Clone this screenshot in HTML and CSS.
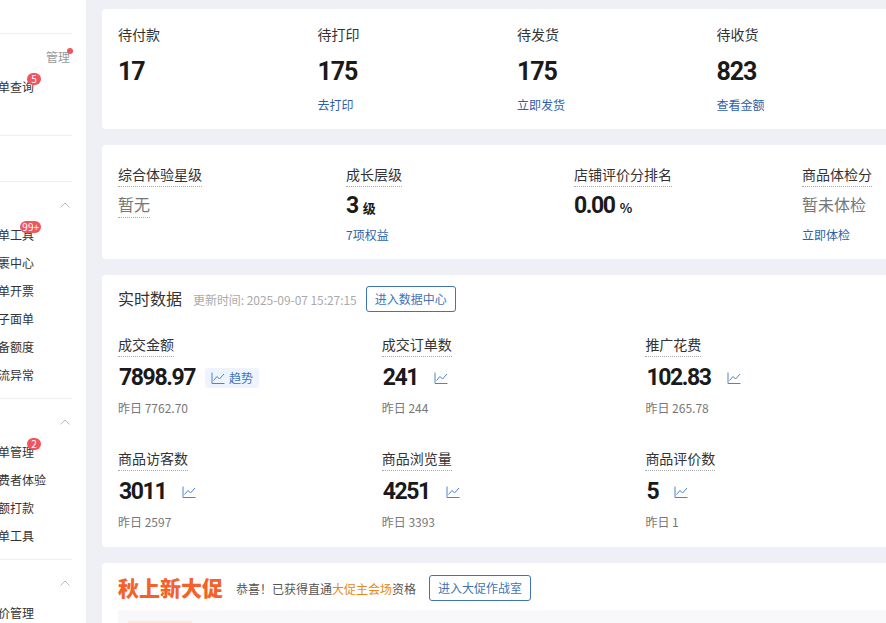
FILE: index.html
```html
<!DOCTYPE html>
<html lang="zh-CN">
<head>
  <meta charset="UTF-8" />
  <meta name="viewport" content="width=device-width, initial-scale=1.0"/>
  <title>商家后台 - 首页</title>
  <link rel="stylesheet" href="styles.css">
</head>
<body>
  <!-- Sidebar, scrolled off to the left -->
  <aside class="sidebar">
    <div class="side-group side-first">
      <div class="side-head"><span class="manage">管理<i class="dot"></i></span></div>
      <div class="side-item"><span class="side-text">订单查询<b class="badge badge-one">5</b></span></div>
    </div>
    <div class="side-group side-empty"></div>
    <div class="side-group side-tools">
      <div class="side-head"><svg class="chevron" viewBox="0 0 10 6"><path d="M0.5 5.5L5 1l4.500 4.500"/></svg></div>
      <div class="side-item"><span class="side-text">批量下单工具<b class="badge badge-wide">99+</b></span></div>
      <div class="side-item"><span class="side-text">包裹中心</span></div>
      <div class="side-item"><span class="side-text">订单开票</span></div>
      <div class="side-item"><span class="side-text">电子面单</span></div>
      <div class="side-item"><span class="side-text">预备额度</span></div>
      <div class="side-item"><span class="side-text">物流异常</span></div>
    </div>
    <div class="side-group side-after">
      <div class="side-head"><svg class="chevron" viewBox="0 0 10 6"><path d="M0.5 5.500L5 1l4.500 4.500"/></svg></div>
      <div class="side-item"><span class="side-text">售后单管理<b class="badge badge-one">2</b></span></div>
      <div class="side-item side-item-long"><span class="side-text">消费者体验</span></div>
      <div class="side-item"><span class="side-text">小额打款</span></div>
      <div class="side-item"><span class="side-text">售后单工具</span></div>
    </div>
    <div class="side-group side-last">
      <div class="side-head"><svg class="chevron" viewBox="0 0 10 6"><path d="M0.5 5.500L5 1l4.500 4.500"/></svg></div>
      <div class="side-item"><span class="side-text">评价管理</span></div>
    </div>
  </aside>

  <main class="main">
    <!-- Orders -->
    <section class="card card-orders">
      <div class="order-col">
        <div class="order-label">待付款</div>
        <div class="big-num">17</div>
      </div>
      <div class="order-col">
        <div class="order-label">待打印</div>
        <div class="big-num">175</div>
        <a class="link">去打印</a>
      </div>
      <div class="order-col">
        <div class="order-label">待发货</div>
        <div class="big-num">175</div>
        <a class="link">立即发货</a>
      </div>
      <div class="order-col">
        <div class="order-label">待收货</div>
        <div class="big-num">823</div>
        <a class="link">查看金额</a>
      </div>
    </section>

    <!-- Shop levels -->
    <section class="card card-levels">
      <div class="level-col">
        <div><span class="dotted-label">综合体验星级</span></div>
        <div class="level-value"><span class="muted-value">暂无</span></div>
      </div>
      <div class="level-col">
        <div><span class="dotted-label">成长层级</span></div>
        <div class="level-value"><span class="big-num big-inline">3</span><span class="unit">级</span></div>
        <a class="link link-small">7项权益</a>
      </div>
      <div class="level-col">
        <div><span class="dotted-label">店铺评价分排名</span></div>
        <div class="level-value"><span class="big-num big-inline">0.00</span><span class="unit">%</span></div>
      </div>
      <div class="level-col">
        <div><span class="dotted-label">商品体检分</span></div>
        <div class="level-value"><span class="muted-value plain">暂未体检</span></div>
        <a class="link link-small">立即体检</a>
      </div>
    </section>

    <!-- Realtime data -->
    <section class="card card-data">
      <div class="data-head">
        <h2 class="card-title">实时数据</h2>
        <span class="update-time">更新时间: 2025-09-07 15:27:15</span>
        <a class="outline-btn">进入数据中心</a>
      </div>
      <div class="data-grid">
        <div class="data-cell">
          <div><span class="dotted-label">成交金额</span></div>
          <div class="data-row">
            <span class="big-num big-inline">7898.97</span>
            <span class="trend trend-box"><svg class="trend-icon" viewBox="0 0 14 12"><path d="M1 0.500V11.500H13.500M2.500 8.500L6 4.500L8.500 7L13 2"/></svg>趋势</span>
          </div>
          <div class="yesterday">昨日 7762.70</div>
        </div>
        <div class="data-cell">
          <div><span class="dotted-label">成交订单数</span></div>
          <div class="data-row">
            <span class="big-num big-inline">241</span>
            <span class="trend"><svg class="trend-icon" viewBox="0 0 14 12"><path d="M1 0.500V11.500H13.500M2.500 8.500L6 4.500L8.500 7L13 2"/></svg></span>
          </div>
          <div class="yesterday">昨日 244</div>
        </div>
        <div class="data-cell">
          <div><span class="dotted-label">推广花费</span></div>
          <div class="data-row">
            <span class="big-num big-inline">102.83</span>
            <span class="trend"><svg class="trend-icon" viewBox="0 0 14 12"><path d="M1 0.500V11.500H13.500M2.500 8.500L6 4.500L8.500 7L13 2"/></svg></span>
          </div>
          <div class="yesterday">昨日 265.78</div>
        </div>
        <div class="data-cell">
          <div><span class="dotted-label">商品访客数</span></div>
          <div class="data-row">
            <span class="big-num big-inline">3011</span>
            <span class="trend"><svg class="trend-icon" viewBox="0 0 14 12"><path d="M1 0.500V11.500H13.500M2.500 8.500L6 4.500L8.500 7L13 2"/></svg></span>
          </div>
          <div class="yesterday">昨日 2597</div>
        </div>
        <div class="data-cell">
          <div><span class="dotted-label">商品浏览量</span></div>
          <div class="data-row">
            <span class="big-num big-inline">4251</span>
            <span class="trend"><svg class="trend-icon" viewBox="0 0 14 12"><path d="M1 0.500V11.500H13.500M2.500 8.500L6 4.500L8.500 7L13 2"/></svg></span>
          </div>
          <div class="yesterday">昨日 3393</div>
        </div>
        <div class="data-cell">
          <div><span class="dotted-label">商品评价数</span></div>
          <div class="data-row">
            <span class="big-num big-inline">5</span>
            <span class="trend"><svg class="trend-icon" viewBox="0 0 14 12"><path d="M1 0.500V11.500H13.500M2.500 8.500L6 4.500L8.500 7L13 2"/></svg></span>
          </div>
          <div class="yesterday">昨日 1</div>
        </div>
      </div>
    </section>

    <!-- Promotion -->
    <section class="card card-promo">
      <div class="promo-head">
        <span class="promo-title">秋上新大促</span>
        <span class="promo-text">恭喜！已获得直通<em>大促主会场</em>资格</span>
        <a class="outline-btn">进入大促作战室</a>
      </div>
      <div class="promo-panel"><span class="promo-tab"></span></div>
    </section>
  </main>
</body>
</html>
```

FILE: styles.css
```css
html, body {
  height: 100%;
}
body {
  margin: 0;
  display: flex;
  height: 623px;
  overflow: hidden;
  background-color: #eff0f6;
  color: #333;
  font-family: "Noto Sans CJK SC", "Liberation Sans", sans-serif;
}
a {
  cursor: pointer;
}

/* sidebar */
.sidebar {
  flex: 0 0 86px;
  width: 86px;
  height: 623px;
  padding-top: 33px;
  box-sizing: border-box;
  background-color: #fff;
}
.side-group {
  width: 72px;
  border-top: 1px solid #eee;
  box-sizing: border-box;
}
.side-first {
  height: 102px;
}
.side-empty {
  height: 46px;
}
.side-tools {
  height: 217px;
}
.side-after {
  height: 161px;
}
.side-head {
  display: flex;
  justify-content: flex-end;
  align-items: center;
  height: 20px;
  margin-top: 13px;
}
.side-item {
  display: flex;
  justify-content: flex-end;
  height: 28px;
  padding-right: 38px;
  font-size: 12px;
  line-height: 28px;
  white-space: nowrap;
}
.side-item-long {
  padding-right: 26px;
}
.side-text {
  position: relative;
  color: #333;
}
.side-first .side-head {
  margin-top: 12px;
  margin-bottom: 7px;
}
.side-tools .side-head,
.side-after .side-head,
.side-last .side-head {
  margin-bottom: 6px;
  padding-right: 2px;
}
.manage {
  position: relative;
  margin-right: 2px;
  font-size: 12px;
  color: #999;
}
.dot {
  position: absolute;
  top: 0;
  right: -3px;
  width: 6px;
  height: 6px;
  border-radius: 50%;
  background-color: #f0545c;
}
.badge {
  position: absolute;
  top: 0;
  right: -7px;
  height: 12px;
  min-width: 12px;
  padding: 0 1px;
  border-radius: 7px;
  background-color: #f0545c;
  color: #fff;
  font-size: 10px;
  font-weight: 400;
  line-height: 12px;
  text-align: center;
}
.badge-wide {
  right: -7px;
  padding: 0 2px;
}
.chevron {
  width: 10px;
  height: 6px;
  fill: none;
  stroke: #bbb;
  stroke-width: 1;
}

/* main column */
.main {
  flex: 0 0 auto;
  width: 900px;
  margin-left: 16px;
  padding-top: 9px;
}
.card {
  box-sizing: border-box;
  margin-bottom: 16px;
  padding: 0 16px;
  background-color: #fff;
  border-radius: 4px;
}
.link {
  display: block;
  font-size: 12px;
  line-height: 16px;
  color: #2f5fa8;
}
.big-num {
  font-family: Roboto, "Liberation Sans", sans-serif;
  font-size: 23px;
  font-weight: 700;
  letter-spacing: -1.4px;
  line-height: 28px;
  color: #1a1a1a;
}
.big-inline {
  display: inline-block;
}
.dotted-label {
  display: inline-block;
  padding-bottom: 1px;
  border-bottom: 1px dotted #aaa;
  font-size: 14px;
  line-height: 21px;
  color: #333;
}

/* orders */
.card-orders {
  display: grid;
  grid-template-columns: repeat(4, 199.5px);
  height: 120px;
  padding-top: 15px;
}
.order-label {
  font-size: 14px;
  line-height: 21px;
  color: #333;
}
.order-col .big-num {
  margin-top: 13px;
  margin-bottom: 11px;
  font-size: 25px;
  letter-spacing: -1.1px;
}

/* levels */
.card-levels {
  display: grid;
  grid-template-columns: repeat(4, 228px);
  height: 114px;
  padding-top: 16px;
}
.level-value {
  display: flex;
  align-items: baseline;
  height: 28px;
  margin-top: 5px;
}
.muted-value {
  border-bottom: 1px dotted #aaa;
  font-size: 16px;
  line-height: 25px;
  color: #777;
}
.muted-value.plain {
  font-size: 16px;
  border-bottom: none;
}
.unit {
  margin-left: 5px;
  font-size: 13px;
  font-weight: 700;
  color: #1a1a1a;
}
.link-small {
  margin-top: 7px;
}

/* realtime */
.card-data {
  height: 272px;
  padding-top: 11px;
}
.data-head {
  display: flex;
  align-items: center;
  height: 26px;
}
.card-title {
  margin: 0 11px 0 0;
  padding-bottom: 2px;
  font-size: 16px;
  font-weight: 400;
  line-height: 24px;
  color: #333;
}
.update-time {
  margin-right: 9px;
  font-size: 12px;
  letter-spacing: -0.05px;
  color: #aaa;
}
.outline-btn {
  box-sizing: border-box;
  height: 26px;
  padding: 0 8px;
  border: 1px solid #3f74b5;
  border-radius: 3px;
  font-size: 12px;
  line-height: 24px;
  color: #3f74b5;
}
.data-grid {
  display: grid;
  grid-template-columns: repeat(3, 263.7px);
  margin-top: 19px;
}
.data-cell {
  height: 114px;
}
.data-row {
  display: flex;
  align-items: center;
  height: 28px;
  margin-top: 7px;
  padding-left: 1px;
}
.trend {
  display: flex;
  align-items: center;
  margin-left: 10px;
  padding: 0 6px;
  font-size: 12px;
  line-height: 20px;
  color: #3f74b5;
}
.trend-box {
  border-radius: 3px;
  background-color: #edf4fd;
}
.trend-icon {
  width: 14px;
  height: 12px;
  fill: none;
  stroke: #4f82d0;
  stroke-width: 1;
}
.trend-box .trend-icon {
  margin-right: 4px;
}
.yesterday {
  margin-top: 8px;
  font-size: 12px;
  line-height: 16px;
  color: #777;
}

/* promo */
.card-promo {
  height: 80px;
  padding-top: 11px;
}
.promo-head {
  display: flex;
  align-items: center;
  height: 28px;
}
.promo-title {
  margin-right: 13px;
  padding-bottom: 3px;
  font-size: 21px;
  font-weight: 900;
  line-height: 24px;
  color: #f4622a;
}
.promo-text {
  margin-right: 13px;
  font-size: 12px;
  color: #555;
}
.promo-text em {
  font-style: normal;
  color: #e58a1a;
}
.promo-panel {
  height: 40px;
  margin-top: 8px;
  background-color: #f8f8fb;
}
.promo-tab {
  display: block;
  width: 64px;
  height: 40px;
  margin-left: 10px;
  padding-top: 11px;
  background: linear-gradient(#ffe9dc 0, #ffe9dc 3px, transparent 3px) 0 11px no-repeat;
}
```
